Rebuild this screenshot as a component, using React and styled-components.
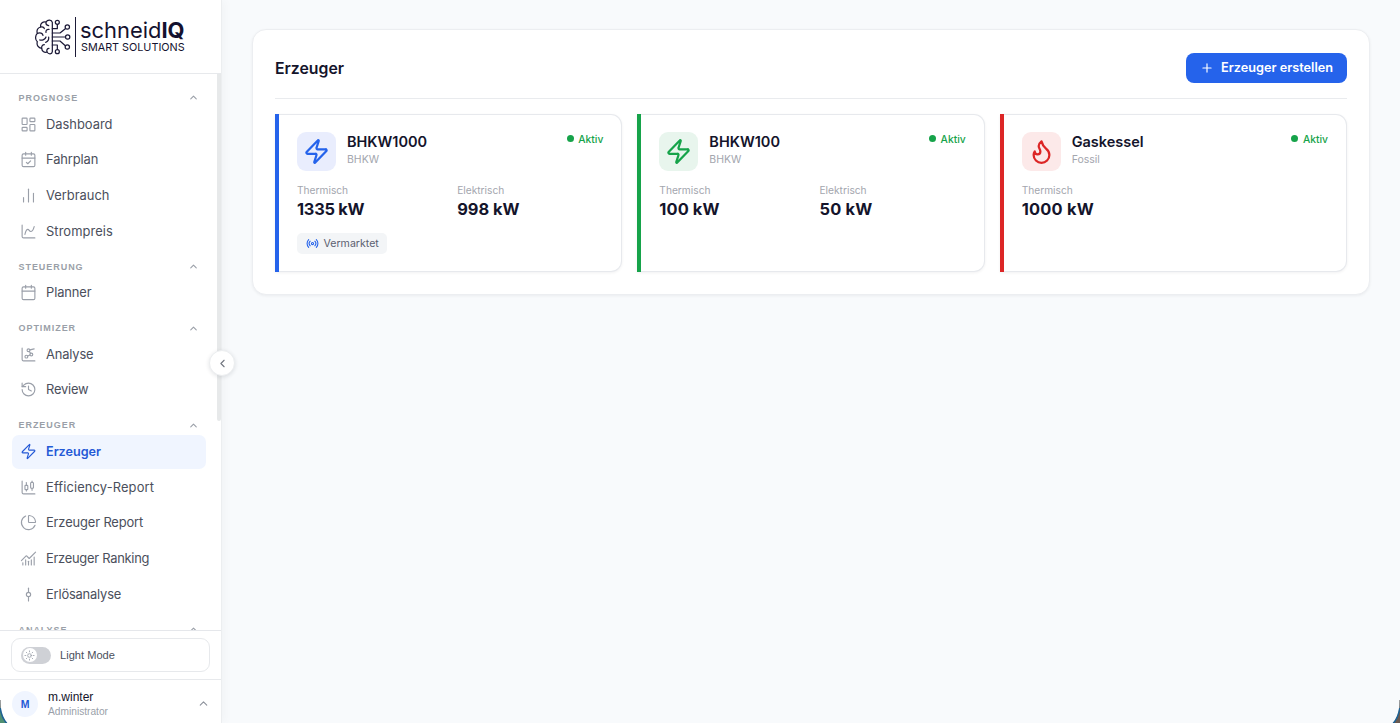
import React from "react";
import styled, { createGlobalStyle, css } from "styled-components";
import {
  LayoutDashboard,
  CalendarCheck,
  ChartNoAxesColumn,
  ChartSpline,
  Calendar,
  ChartNetwork,
  History,
  Zap,
  ChartCandlestick,
  ChartPie,
  ChartNoAxesCombined,
  GitCommitVertical,
  ChevronUp,
  ChevronLeft,
  Flame,
  Radio,
  Plus,
  Sun,
} from "lucide-react";

const GlobalStyle = createGlobalStyle`
  *, *::before, *::after { box-sizing: border-box; }
  html, body { margin: 0; padding: 0; overflow: hidden; }
  body { font-family: Inter, "Liberation Sans", sans-serif; background: #f8fafc; color: #14142b; }
`;

const Shell = styled.div`
  position: relative;
  display: flex;
  width: 100%;
  height: 100vh;
  overflow: hidden;
  background: #f8fafc;
`;

/* ---------- sidebar ---------- */

const Sidebar = styled.aside`
  position: relative;
  display: flex;
  flex-direction: column;
  flex: none;
  width: 222px;
  height: 100%;
  background: #fff;
  border-right: 1px solid #eceef0;
  box-shadow: 2px 0 10px rgba(15, 23, 42, 0.035);
`;

const Brand = styled.header`
  display: flex;
  align-items: center;
  flex: none;
  height: 74px;
  padding-left: 35px;
  border-bottom: 1px solid #e7e9ec;
`;

const BrandMark = styled.svg`
  display: block;
  width: 36px;
  height: 38px;
  fill: none;
  stroke: #1d1b38;
  stroke-width: 3.7;
  stroke-linecap: round;
  stroke-linejoin: round;
`;

const BrandRule = styled.span`
  width: 1px;
  height: 40px;
  margin: 0 5px 0 4px;
  background: #1d1b38;
`;

const BrandText = styled.div`
  display: flex;
  flex-direction: column;
  color: #14122f;
  white-space: nowrap;
`;

const BrandName = styled.span`
  margin-left: -1px;
  font-size: 21.9px;
  line-height: 21px;
  b { font-weight: 700; }
`;

const BrandClaim = styled.span`
  font-size: 10.8px;
  line-height: 13px;
`;

const NavArea = styled.div`
  display: flex;
  flex: 1;
  min-height: 0;
  overflow: hidden;
`;

const Nav = styled.nav`
  flex: 1;
  padding: 7.2px 11px 0 12px;
`;

const ScrollThumb = styled.div`
  flex: none;
  width: 4px;
  height: 347px;
  background: #e7e9ea;
  border-radius: 0 0 2px 2px;
`;

const Group = styled.section`
  padding-top: 9.8px;
`;

const GroupHeading = styled.div`
  display: flex;
  align-items: center;
  justify-content: space-between;
  height: 14px;
  margin-bottom: 2.2px;
  padding: 0 7px 0 6.5px;
  font: 700 9px/14px "Liberation Sans", Arial, sans-serif;
  letter-spacing: 0.95px;
  color: #9a9fa8;
`;

const NavItem = styled.a`
  display: flex;
  align-items: center;
  gap: 9px;
  height: 34px;
  margin-bottom: 1.65px;
  padding-left: 8px;
  border-radius: 7px;
  font-size: 12.9px;
  letter-spacing: ${(p) => p.$tracking || 0}px;
  white-space: nowrap;
  color: #4b4f5c;
  svg { flex: none; color: #9a9fa9; }
  ${(p) =>
    p.$active &&
    css`
      background: #f0f5ff;
      color: #2459d6;
      font-weight: 600;
      font-size: 12.6px;
      svg { color: #2459d6; }
    `}
`;

const SidebarFooter = styled.footer`
  flex: none;
  height: 93px;
  background: #fff;
  border-top: 1px solid #e5e7eb;
  font-family: "Liberation Sans", Arial, sans-serif;
`;

const ThemeSection = styled.div`
  height: 49px;
  padding: 7px 11px 0;
  border-bottom: 1px solid #e7e9ec;
`;

const ThemeBox = styled.div`
  display: flex;
  align-items: center;
  gap: 9px;
  height: 34px;
  padding-left: 9px;
  border: 1px solid #e7e9ec;
  border-radius: 9px;
  font-size: 11.1px;
  color: #4b4f5c;
`;

const Switch = styled.span`
  display: flex;
  align-items: center;
  width: 30px;
  height: 17px;
  padding: 1.5px;
  border-radius: 9px;
  background: #cfd1d6;
`;

const Knob = styled.span`
  display: grid;
  place-items: center;
  width: 14px;
  height: 14px;
  border-radius: 50%;
  background: #fff;
  color: #9a9fa9;
`;

const UserRow = styled.div`
  display: flex;
  align-items: center;
  height: 43px;
  padding: 4px 11px 0 12px;
`;

const Avatar = styled.span`
  display: grid;
  place-items: center;
  width: 26px;
  height: 26px;
  border-radius: 50%;
  background: #f0f5ff;
  color: #2459d6;
  font-size: 10.5px;
  font-weight: 700;
`;

const UserText = styled.div`
  flex: 1;
  padding: 1px 0 0 10px;
`;

const UserName = styled.div`
  font-size: 12px;
  line-height: 15px;
  color: #14142b;
`;

const UserRole = styled.div`
  font-size: 10.2px;
  line-height: 14px;
  color: #9a9fa9;
`;

const UserChevron = styled(ChevronUp)`
  color: #8d929c;
`;

const CollapseButton = styled.button`
  position: absolute;
  top: 350px;
  right: -14px;
  display: grid;
  place-items: center;
  width: 26px;
  height: 26px;
  padding: 0;
  border: 1px solid #eceef0;
  border-radius: 50%;
  background: #fff;
  color: #70757f;
  box-shadow: 0 1px 4px rgba(15, 23, 42, 0.12);
`;

/* ---------- main ---------- */

const Main = styled.main`
  flex: 1;
  min-width: 0;
  padding: 29px 30px 0;
`;

const Panel = styled.section`
  height: 266px;
  padding: 23px 22px 0;
  border: 1px solid #eceef1;
  border-radius: 14px;
  background: #fff;
  box-shadow: 0 1px 3px rgba(15, 23, 42, 0.06);
`;

const PanelHeader = styled.header`
  display: flex;
  align-items: flex-start;
  justify-content: space-between;
  height: 46px;
  border-bottom: 1px solid #e9ebee;
`;

const PanelTitle = styled.h1`
  margin: 0;
  font-size: 15.8px;
  line-height: 31px;
  font-weight: 600;
  color: #14142b;
`;

const CreateButton = styled.button`
  display: flex;
  align-items: center;
  gap: 7px;
  height: 30px;
  padding: 0 14px;
  border: 0;
  border-radius: 8px;
  background: #2563eb;
  color: #fff;
  font: 600 12.7px/30px Inter, sans-serif;
  white-space: nowrap;
`;

const CardGrid = styled.div`
  display: grid;
  grid-template-columns: repeat(3, 1fr);
  gap: 15px;
  padding-top: 15px;
`;

const Card = styled.article`
  position: relative;
  height: 158px;
  padding: 16.5px 18px 0 22px;
  border: 1px solid #e7e9ed;
  border-left: 0;
  border-radius: 0 11px 11px 0;
  background: #fff;
  box-shadow: 0 1px 3px rgba(15, 23, 42, 0.06);
  &::before {
    content: "";
    position: absolute;
    inset: -1px auto -1px 0;
    width: 4px;
    background: ${(p) => p.$color};
  }
`;

const CardTop = styled.div`
  display: flex;
  align-items: flex-start;
  height: 39px;
`;

const IconTile = styled.span`
  display: grid;
  place-items: center;
  width: 39px;
  height: 39px;
  border-radius: 9px;
  background: ${(p) => p.$tint};
  color: ${(p) => p.$color};
`;

const CardTitles = styled.div`
  flex: 1;
  padding: 1px 0 0 11px;
`;

const CardName = styled.div`
  font-size: 14.5px;
  line-height: 18px;
  font-weight: 600;
  color: #14142b;
`;

const CardKind = styled.div`
  font-size: 10.5px;
  line-height: 18px;
  color: #a3a6ae;
`;

const Status = styled.span`
  display: flex;
  align-items: center;
  gap: 4.5px;
  font-size: 10.3px;
  line-height: 14px;
  font-weight: 500;
  color: #16a34a;
  &::before {
    content: "";
    width: 7px;
    height: 7px;
    border-radius: 50%;
    background: #16a34a;
  }
`;

const Metrics = styled.div`
  display: grid;
  grid-template-columns: 1fr 1fr;
  gap: 14px;
  padding-top: 11.5px;
`;

const MetricLabel = styled.div`
  font-size: 10.2px;
  line-height: 16px;
  color: #a3a6ae;
`;

const MetricValue = styled.div`
  font-size: 16.4px;
  line-height: 23px;
  font-weight: 650;
  letter-spacing: ${(p) => p.$tracking || 0}px;
  color: #14142b;
`;

const Tag = styled.span`
  display: inline-flex;
  align-items: center;
  gap: 5px;
  height: 21px;
  margin-top: 12px;
  padding: 0 8.5px;
  border-radius: 5px;
  background: #f3f5f7;
  font-size: 10.6px;
  color: #5b6070;
  svg { color: #2563eb; }
`;

/* rounded bottom window corners with the desktop behind them */
const WindowCorner = styled.svg`
  position: absolute;
  bottom: 0;
  ${(p) => (p.$right ? "right: 0; transform: scaleX(-1);" : "left: 0;")}
  width: 8px;
  height: 27px;
`;

const NAV = [
  {
    title: "PROGNOSE",
    items: [
      ["Dashboard", LayoutDashboard],
      ["Fahrplan", CalendarCheck, -0.1],
      ["Verbrauch", ChartNoAxesColumn],
      ["Strompreis", ChartSpline, 0.08],
    ],
  },
  { title: "STEUERUNG", items: [["Planner", Calendar, -0.1]] },
  {
    title: "OPTIMIZER",
    items: [
      ["Analyse", ChartNetwork, -0.15],
      ["Review", History, -0.2],
    ],
  },
  {
    title: "ERZEUGER",
    items: [
      ["Erzeuger", Zap],
      ["Efficiency-Report", ChartCandlestick, 0.13],
      ["Erzeuger Report", ChartPie, -0.13],
      ["Erzeuger Ranking", ChartNoAxesCombined, -0.26],
      ["Erlösanalyse", GitCommitVertical, -0.18],
    ],
  },
  { title: "ANALYSE", items: [] },
];

const UNITS = [
  {
    name: "BHKW1000",
    kind: "BHKW",
    icon: Zap,
    color: "#2563eb",
    tint: "#e9edfd",
    metrics: [["Thermisch", "1335 kW", -0.25], ["Elektrisch", "998 kW"]],
    tag: "Vermarktet",
  },
  {
    name: "BHKW100",
    kind: "BHKW",
    icon: Zap,
    color: "#16a34a",
    tint: "#e8f5ed",
    metrics: [["Thermisch", "100 kW", 0.1], ["Elektrisch", "50 kW", 0.2]],
  },
  {
    name: "Gaskessel",
    kind: "Fossil",
    icon: Flame,
    color: "#dc2626",
    tint: "#fce9e9",
    metrics: [["Thermisch", "1000 kW", 0.25]],
  },
];

function BrainLogo() {
  return (
    <BrandMark viewBox="105 55 108 114">
      <path d="M157 68C155 60 143 59 138 67C128 65 120 72 122 82C113 84 109 92 112 101C105 108 105 120 112 126C109 136 115 145 125 146C126 156 134 160 141 157C146 165 156 164 157 156Z" />
      <path d="M138 67C137 73 141 77 146 78M122 82C127 80 132 83 133 87M147 89C140 88 137 93 138 98M112 101C120 97 128 101 129 107M119 121C127 123 136 119 138 112M146 112C147 120 143 126 137 128M125 146C124 139 128 135 133 135M141 157C139 151 142 146 147 146" />
      <path d="M157 87H172V75M157 100H180L196 87M157 112H195M157 124H180L196 138M157 136H172V149" />
      <circle cx="172" cy="68" r="6" />
      <circle cx="202" cy="82" r="6.5" />
      <circle cx="203" cy="112" r="6.5" />
      <circle cx="202" cy="142" r="6.5" />
      <circle cx="172" cy="156" r="6" />
    </BrandMark>
  );
}

function Corner({ right }) {
  return (
    <WindowCorner viewBox="0 0 8 27" $right={right}>
      <path d="M0 5C0.5 16 3 23 7 27H0Z" fill={right ? "#6b5a50" : "#4f8f72"} />
      <path d="M0 4V13" fill="none" stroke="#77797c" strokeWidth="1.4" />
      <path d="M0.2 12C1 18 3.4 23.5 6.8 27.5" fill="none" stroke="#1f6294" strokeWidth="1.6" />
    </WindowCorner>
  );
}

export default function App() {
  return (
    <>
      <GlobalStyle />
      <Shell>
        <Sidebar>
          <Brand>
            <BrainLogo />
            <BrandRule />
            <BrandText>
              <BrandName>schneid<b>IQ</b></BrandName>
              <BrandClaim>SMART SOLUTIONS</BrandClaim>
            </BrandText>
          </Brand>
          <NavArea>
            <Nav>
              {NAV.map((group) => (
                <Group key={group.title}>
                  <GroupHeading>
                    {group.title}
                    <ChevronUp size={11} strokeWidth={2.4} />
                  </GroupHeading>
                  {group.items.map(([label, Icon, tracking]) => (
                    <NavItem key={label} $active={label === "Erzeuger"} $tracking={tracking}>
                      <Icon size={17} strokeWidth={1.6} />
                      {label}
                    </NavItem>
                  ))}
                </Group>
              ))}
            </Nav>
            <ScrollThumb />
          </NavArea>
          <SidebarFooter>
            <ThemeSection>
              <ThemeBox>
                <Switch>
                  <Knob>
                    <Sun size={11} strokeWidth={1.8} />
                  </Knob>
                </Switch>
                Light Mode
              </ThemeBox>
            </ThemeSection>
            <UserRow>
              <Avatar>M</Avatar>
              <UserText>
                <UserName>m.winter</UserName>
                <UserRole>Administrator</UserRole>
              </UserText>
              <UserChevron size={13} strokeWidth={2.1} />
            </UserRow>
          </SidebarFooter>
          <CollapseButton aria-label="Seitenleiste einklappen">
            <ChevronLeft size={13} strokeWidth={2} />
          </CollapseButton>
        </Sidebar>
        <Main>
          <Panel>
            <PanelHeader>
              <PanelTitle>Erzeuger</PanelTitle>
              <CreateButton>
                <Plus size={14} strokeWidth={2} />
                Erzeuger erstellen
              </CreateButton>
            </PanelHeader>
            <CardGrid>
              {UNITS.map(({ name, kind, icon: Icon, color, tint, metrics, tag }) => (
                <Card key={name} $color={color}>
                  <CardTop>
                    <IconTile $tint={tint} $color={color}>
                      <Icon size={27} strokeWidth={2} />
                    </IconTile>
                    <CardTitles>
                      <CardName>{name}</CardName>
                      <CardKind>{kind}</CardKind>
                    </CardTitles>
                    <Status>Aktiv</Status>
                  </CardTop>
                  <Metrics>
                    {metrics.map(([label, value, tracking]) => (
                      <div key={label}>
                        <MetricLabel>{label}</MetricLabel>
                        <MetricValue $tracking={tracking}>{value}</MetricValue>
                      </div>
                    ))}
                  </Metrics>
                  {tag && (
                    <Tag>
                      <Radio size={13} strokeWidth={2} />
                      {tag}
                    </Tag>
                  )}
                </Card>
              ))}
            </CardGrid>
          </Panel>
        </Main>
        <Corner />
        <Corner right />
      </Shell>
    </>
  );
}
